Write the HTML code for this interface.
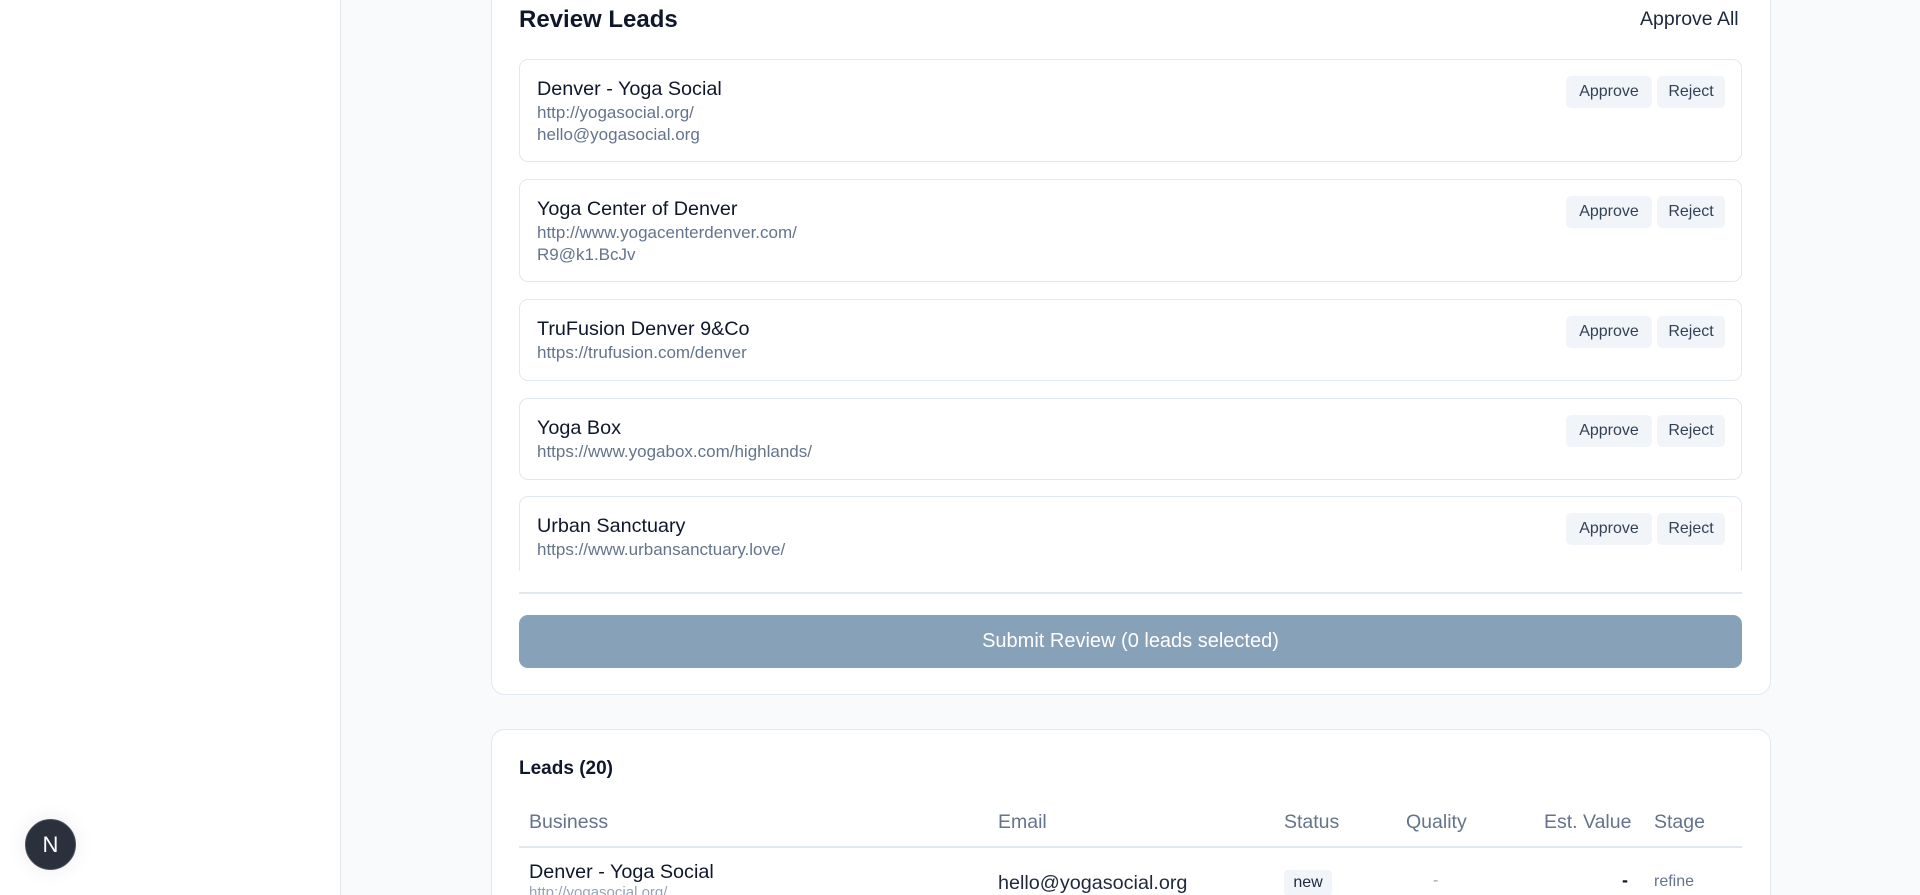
<!DOCTYPE html>
<html style="overflow:hidden;height:895px"><head><meta charset="utf-8"><style>
*{box-sizing:border-box;margin:0;padding:0}
body{width:1920px;height:895px;overflow:hidden;background:#f8fafc;font-family:"Liberation Sans",sans-serif;color:#0f172a;position:relative}
.side{position:absolute;left:0;top:0;width:341px;height:895px;background:#fff;border-right:1px solid #e2e8f0}
.card{position:absolute;left:491px;width:1280px;background:#fff;border:1px solid #e2e8f0;border-radius:14px}
.abs{position:absolute}
.item{position:absolute;left:519px;width:1223px;border:1px solid #e2e8f0;border-radius:9px;background:#fff}
.item .n{position:absolute;left:17px;top:18px;font-size:19.8px;color:#0f172a}
.item .l{position:absolute;left:17px;font-size:17px;color:#64748b}
.btn{position:absolute;top:16px;height:32px;background:#f1f5f9;border-radius:5px;font-size:16px;color:#334155;text-align:center;line-height:32px}
.th{position:absolute;top:811px;font-size:19.5px;color:#64748b}
</style></head><body>
<div class="side"></div>
<div class="card" style="top:-20px;height:715px"></div>
<div class="abs" style="left:519px;top:6px;font-size:24px;font-weight:bold;color:#0f172a">Review Leads</div>
<div class="abs" style="left:1640px;top:8px;font-size:19.5px;color:#1e293b">Approve All</div>

<div class="item" style="top:59px;height:103px"><div class="n">Denver - Yoga Social</div><div class="l" style="top:43px">http://yogasocial.org/</div><div class="l" style="top:65px">hello@yogasocial.org</div><div class="btn" style="left:1046px;width:86px">Approve</div><div class="btn" style="left:1137px;width:68px">Reject</div></div>
<div class="item" style="top:179px;height:103px"><div class="n">Yoga Center of Denver</div><div class="l" style="top:43px">http://www.yogacenterdenver.com/</div><div class="l" style="top:65px">R9@k1.BcJv</div><div class="btn" style="left:1046px;width:86px">Approve</div><div class="btn" style="left:1137px;width:68px">Reject</div></div>
<div class="item" style="top:299px;height:82px"><div class="n">TruFusion Denver 9&amp;Co</div><div class="l" style="top:43px">https://trufusion.com/denver</div><div class="btn" style="left:1046px;width:86px">Approve</div><div class="btn" style="left:1137px;width:68px">Reject</div></div>
<div class="item" style="top:398px;height:82px"><div class="n">Yoga Box</div><div class="l" style="top:43px">https://www.yogabox.com/highlands/</div><div class="btn" style="left:1046px;width:86px">Approve</div><div class="btn" style="left:1137px;width:68px">Reject</div></div>
<div class="abs" style="left:519px;top:496px;width:1223px;height:75px;overflow:hidden">
<div class="item" style="left:0;top:0;height:82px"><div class="n">Urban Sanctuary</div><div class="l" style="top:43px">https://www.urbansanctuary.love/</div><div class="btn" style="left:1046px;width:86px">Approve</div><div class="btn" style="left:1137px;width:68px">Reject</div></div></div>
<div class="abs" style="left:519px;top:592px;width:1223px;height:2px;background:#e2e8f0"></div>
<div class="abs" style="left:519px;top:615px;width:1223px;height:53px;background:#87a1b9;border-radius:9px;color:#fff;font-size:20px;text-align:center;line-height:53px">Submit Review (0 leads selected)</div>

<div class="card" style="top:729px;height:200px"></div>
<div class="abs" style="left:519px;top:758px;font-size:19px;font-weight:bold">Leads (20)</div>
<div class="th" style="left:529px">Business</div>
<div class="th" style="left:998px">Email</div>
<div class="th" style="left:1284px">Status</div>
<div class="th" style="left:1406px">Quality</div>
<div class="th" style="left:1544px">Est. Value</div>
<div class="th" style="left:1654px">Stage</div>
<div class="abs" style="left:519px;top:846px;width:1223px;height:2px;background:#e2e8f0"></div>
<div class="abs" style="left:529px;top:861px;font-size:19.8px">Denver - Yoga Social</div>
<div class="abs" style="left:529px;top:884px;font-size:15px;color:#94a3b8">http://yogasocial.org/</div>
<div class="abs" style="left:998px;top:872px;font-size:19.8px;color:#1e293b">hello@yogasocial.org</div>
<div class="abs" style="left:1284px;top:870px;width:48px;height:26px;background:#f1f5f9;border-radius:4px;font-size:16px;text-align:center;line-height:26px;color:#1e293b">new</div>
<div class="abs" style="left:1433px;top:872px;font-size:16px;color:#94a3b8">-</div>
<div class="abs" style="left:1622px;top:870px;font-size:18px;font-weight:bold">-</div>
<div class="abs" style="left:1654px;top:873px;font-size:16px;color:#64748b">refine</div>

<div class="abs" style="left:25px;top:819px;width:51px;height:51px;border-radius:50%;background:#2a303c;border:1px solid #4a5568;box-shadow:0 0 20px rgba(0,0,0,0.08);color:#fff;font-size:22px;text-align:center;line-height:49px">N</div>
</body></html>
